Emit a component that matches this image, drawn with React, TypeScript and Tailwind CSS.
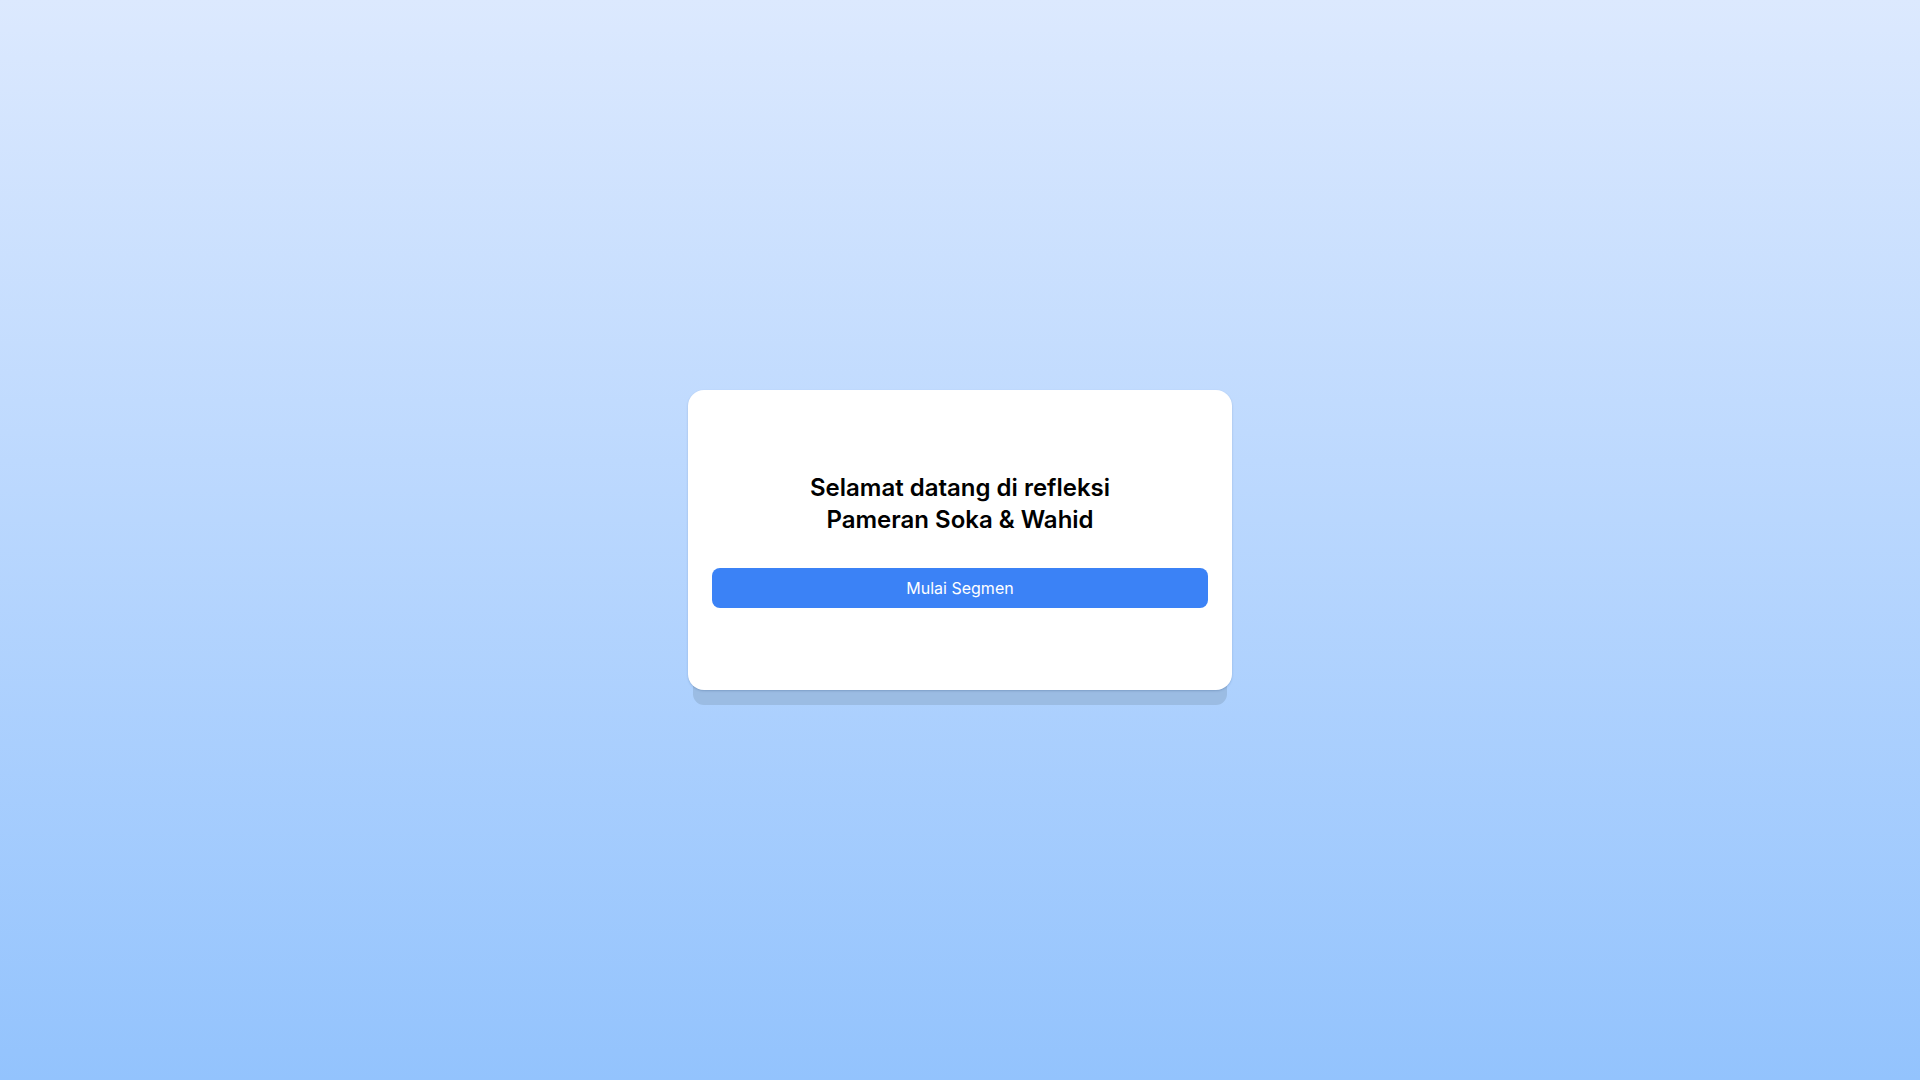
export default function App() {
  return (
    <div
      className="min-h-screen w-full flex items-center justify-center bg-gradient-to-b from-[#dce9fe] to-[#93c3fd]"
      style={{ fontFamily: "Inter, 'Noto Sans', sans-serif" }}
    >
      <div className="w-[544px] h-[300px] bg-white rounded-2xl flex flex-col items-center justify-center px-6 shadow-[0_1px_2px_rgba(40,70,120,0.25),0_20px_0_-5px_#9bbce3]">
        <h1 className="text-2xl leading-8 font-semibold text-black text-center">
          Selamat datang di refleksi
          <br />
          Pameran Soka &amp; Wahid
        </h1>
        <button className="mt-8 w-full h-10 rounded-lg bg-[#3b82f6] text-white text-base">
          Mulai Segmen
        </button>
      </div>
    </div>
  );
}
